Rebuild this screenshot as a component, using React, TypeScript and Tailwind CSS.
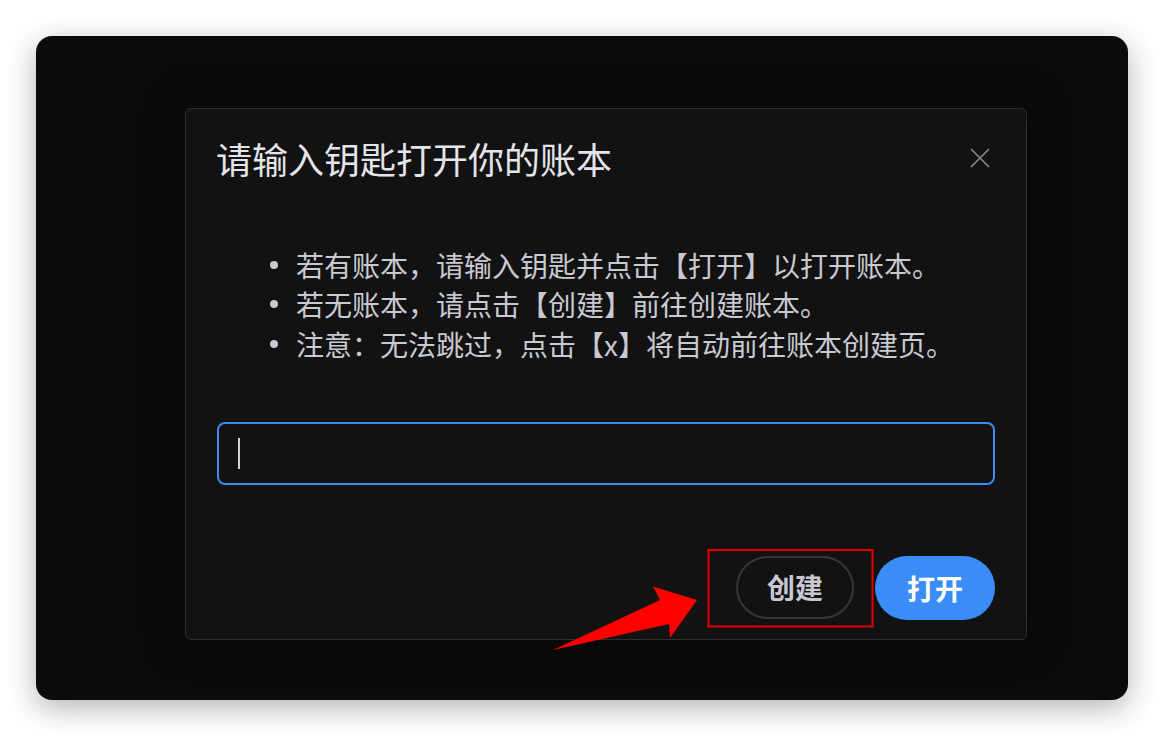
import React from 'react';

const font = { fontFamily: '"Noto Sans CJK SC", "Noto Sans", sans-serif' };

const tips = [
  '若有账本，请输入钥匙并点击【打开】以打开账本。',
  '若无账本，请点击【创建】前往创建账本。',
  '注意：无法跳过，点击【x】将自动前往账本创建页。',
];

const App: React.FC = () => {
  return (
    <div className="relative w-[1164px] h-[736px] bg-white p-9" style={font}>
      <div className="w-full h-full rounded-[16px] bg-[#0b0b0b] shadow-[0_8px_30px_rgba(0,0,0,0.3)] pl-[149px] pt-[72px]">
        <div className="w-[842px] h-[532px] flex flex-col rounded-[6px] border border-[#2e2e2e] bg-[#121212] px-[31px] shadow-[0_0_40px_rgba(0,0,0,0.5)]">
          {/* header */}
          <div className="flex items-center justify-between pt-[29px]">
            <h1 className="text-[36px] leading-[40px] text-[#e4e4ea] -ml-[1px]">请输入钥匙打开你的账本</h1>
            <button className="mr-[5px] w-[20px] h-[20px] text-[#8a8a8e]">
              <svg width="20" height="20" viewBox="0 0 20 20" fill="none" stroke="currentColor" strokeWidth="1.6">
                <path d="M1 1 19 19M19 1 1 19" />
              </svg>
            </button>
          </div>

          {/* tips */}
          <ul className="mt-[67px] flex flex-col">
            {tips.map((t) => (
              <li key={t} className="flex items-center h-[39.5px] pl-[53px] text-[28px] text-[#c9c9d1]">
                <span className="w-[8px] h-[8px] rounded-full bg-[#c9c9d1] mr-[18px] shrink-0" />
                <span className="whitespace-nowrap">{t}</span>
              </li>
            ))}
          </ul>

          {/* key input */}
          <div className="mt-[58px] h-[63px] rounded-[8px] border-2 border-[#3b8bf0] flex items-center pl-[19px]">
            <span className="w-[2px] h-[31px] bg-[#d2d2da]" />
          </div>

          {/* actions */}
          <div className="mt-[71px] flex justify-end gap-[21px]">
            <button className="w-[118px] h-[63px] rounded-full border-2 border-[#363636] text-[28px] font-bold text-[#c8c8d0]">
              创建
            </button>
            <button className="w-[120px] h-[64px] rounded-full bg-[#3a8cf7] text-[28px] font-bold text-white">
              打开
            </button>
          </div>
        </div>
      </div>

      {/* annotation */}
      <svg className="absolute inset-0 pointer-events-none" width="1164" height="736">
        <rect x="708.5" y="550" width="164" height="76.5" fill="none" stroke="#e60000" strokeWidth="2" />
        <polygon
          points="553,650 660,600 653,586.5 697,600 670,638 669,624"
          fill="#ff0000"
        />
      </svg>
    </div>
  );
};

export default App;
